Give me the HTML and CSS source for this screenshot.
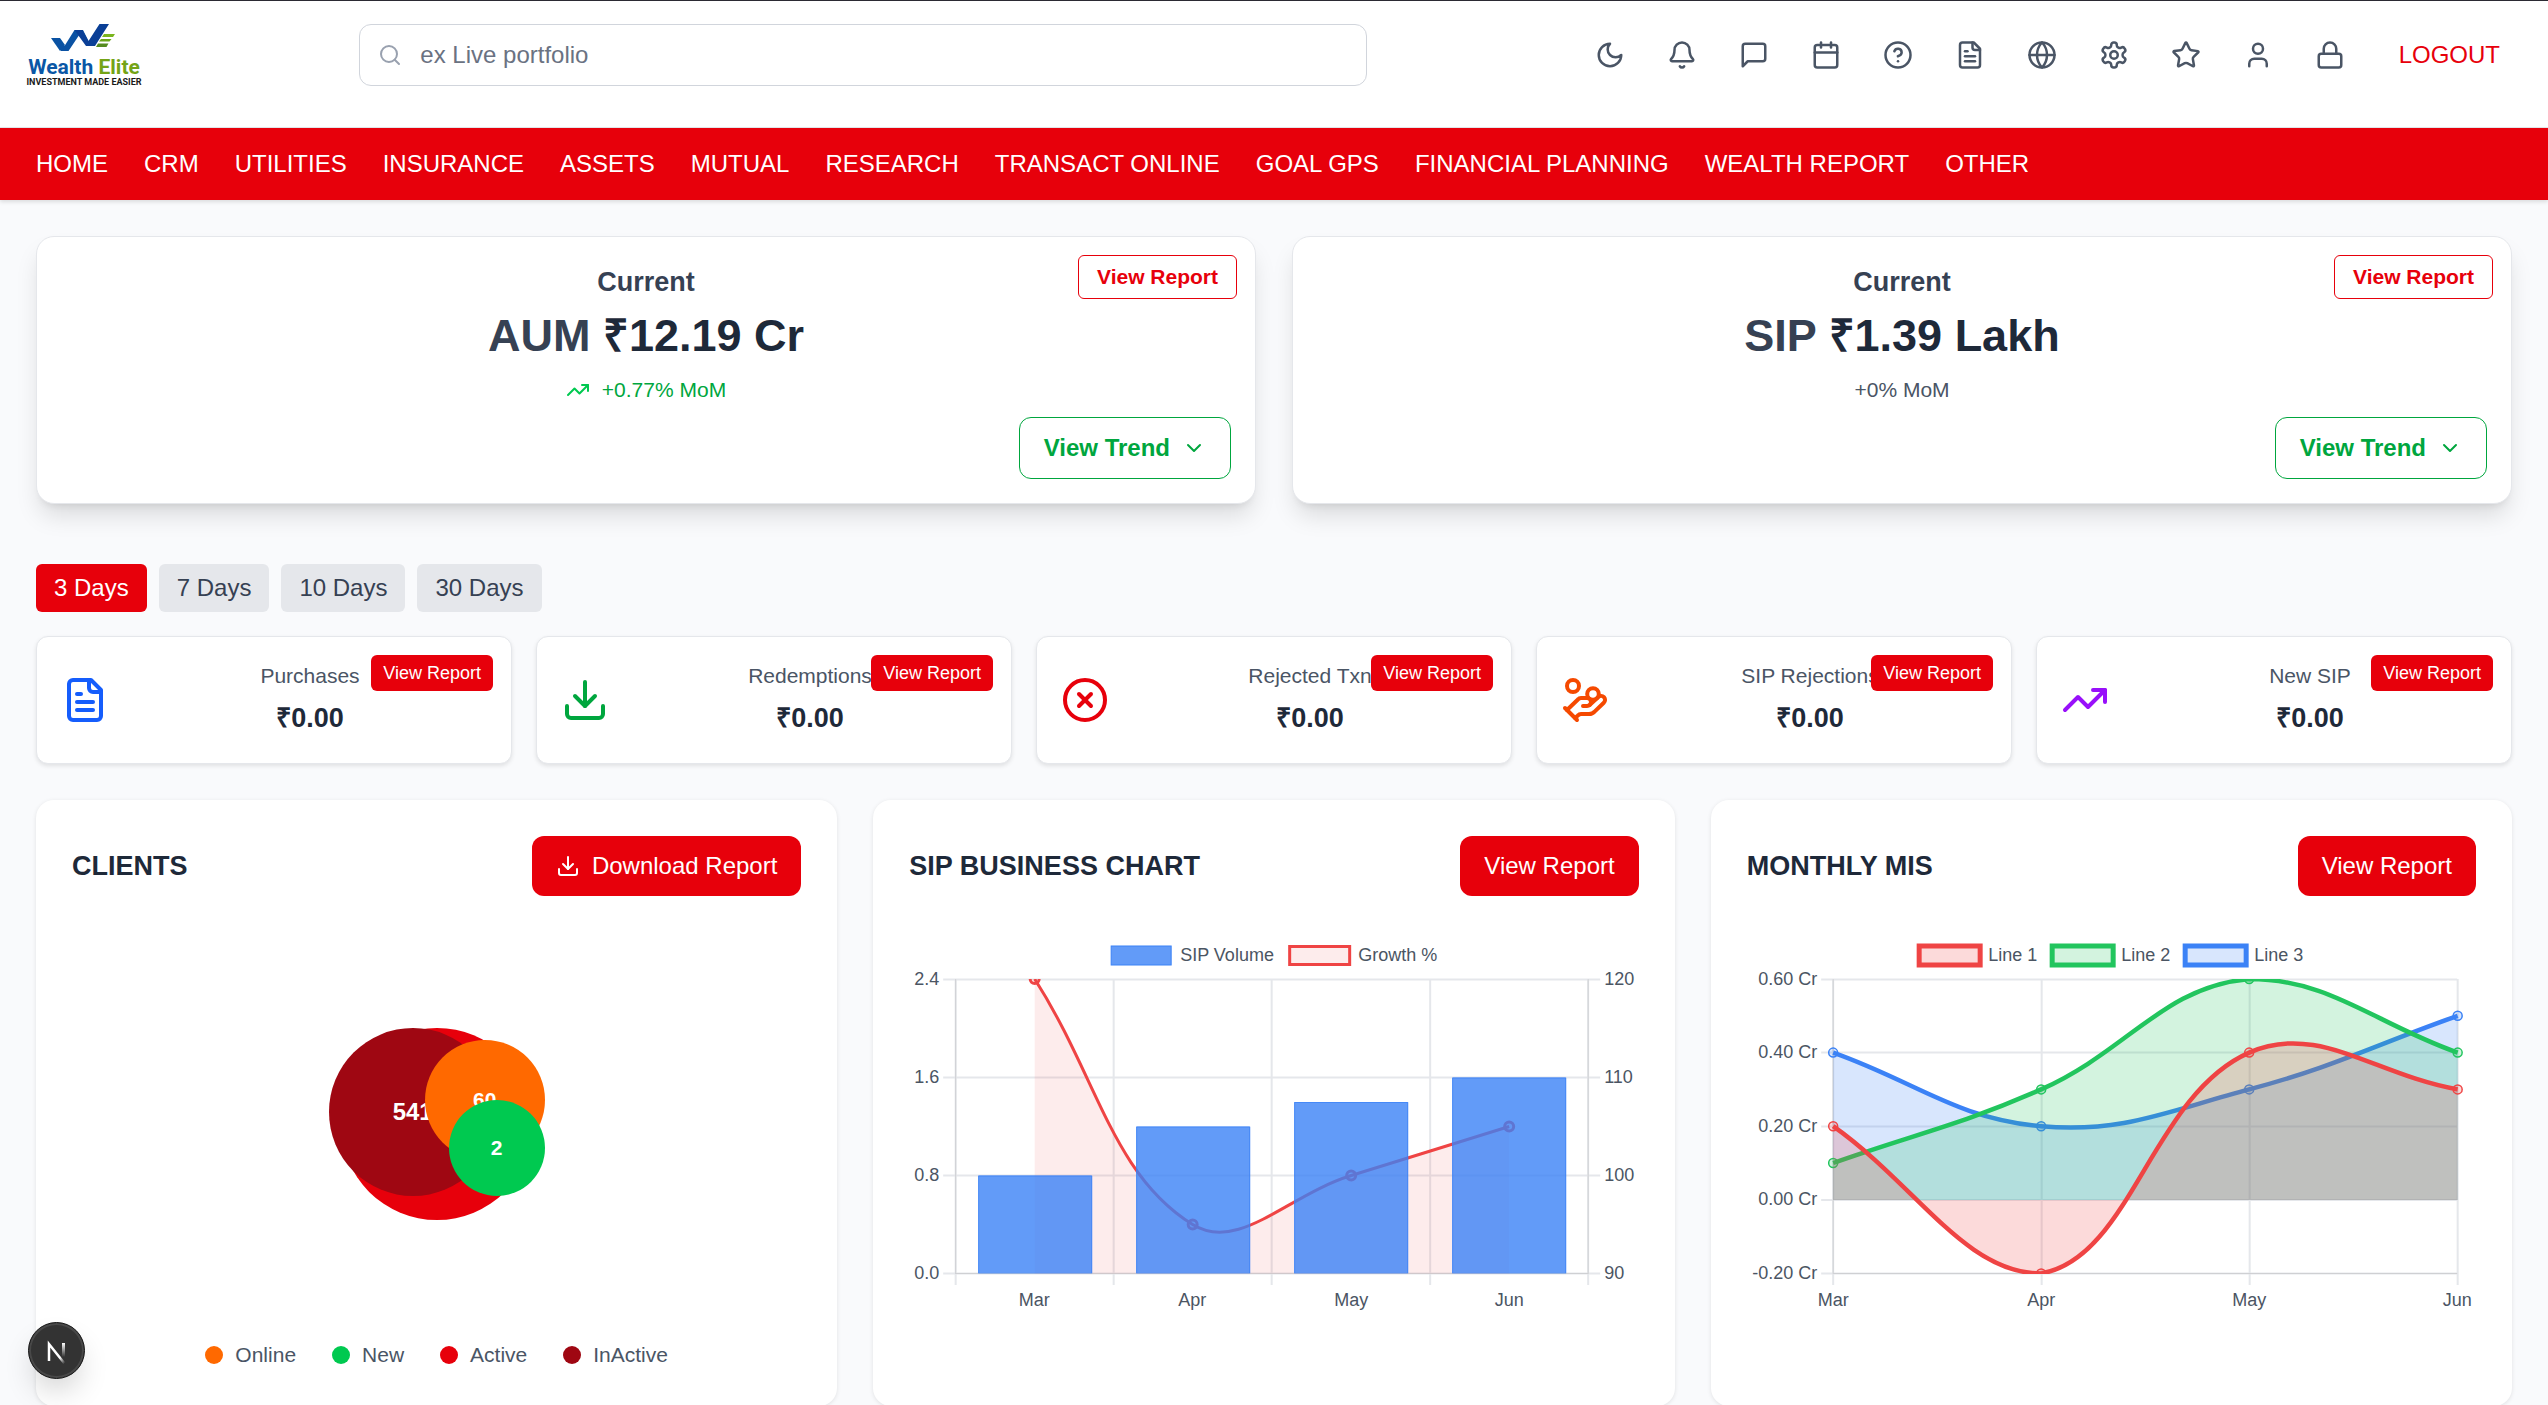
FILE: index.html
```html
<!DOCTYPE html>
<html lang="en">
<head>
<meta charset="utf-8">
<meta name="viewport" content="width=device-width, initial-scale=1">
<title>Wealth Elite</title>
<link rel="stylesheet" href="styles.css">
</head>
<body>
<svg class="sprite" aria-hidden="true">
  <symbol id="i-file" viewBox="0 0 24 24"><path d="M15 2H6a2 2 0 0 0-2 2v16a2 2 0 0 0 2 2h12a2 2 0 0 0 2-2V7Z"/><path d="M14 2v4a2 2 0 0 0 2 2h4"/><path d="M10 9H8"/><path d="M16 13H8"/><path d="M16 17H8"/></symbol>
  <symbol id="i-download" viewBox="0 0 24 24"><path d="M12 15V3"/><path d="M21 15v4a2 2 0 0 1-2 2H5a2 2 0 0 1-2-2v-4"/><path d="m7 10 5 5 5-5"/></symbol>
  <symbol id="i-trend" viewBox="0 0 24 24"><path d="M16 7h6v6"/><path d="m22 7-8.5 8.5-5-5L2 17"/></symbol>
  <symbol id="i-chevron" viewBox="0 0 24 24"><path d="m6 9 6 6 6-6"/></symbol>
</svg>

<header class="header">
  <a class="logo" href="#" aria-label="Wealth Elite">
    <svg width="120" height="62" viewBox="0 0 120 62">
      <path d="M27 14h9l5 7-5 6z" fill="#0b57a4"/>
      <path d="M51 6h8l8 16-4 0z" fill="#0b57a4"/>
      <path d="M28 14h7.500l5 8 10-16h8L44.500 27H37z" fill="#0a52a3"/>
      <path d="M50.500 6h8l6 11L75.500 0H85L71 22h-9z" fill="#0a3f96"/>
      <path d="M80 10h11l-2 3H78z" fill="#7ab51d"/>
      <path d="M77 15h10.500l-2 2.500H75z" fill="#6aa616"/>
      <path d="M74 19.500h10.500L82.500 23H72z" fill="#558b1e"/>
      <text class="logo-name" x="60" y="50" text-anchor="middle"><tspan fill="#0a57a6">Wealth</tspan> <tspan fill="#74a416">Elite</tspan></text>
      <text class="logo-tag" x="60" y="61" text-anchor="middle">INVESTMENT MADE EASIER</text>
    </svg>
  </a>
  <label class="search">
    <svg class="icon" viewBox="0 0 24 24"><circle cx="11" cy="11" r="8"/><path d="m21 21-4.300-4.300"/></svg>
    <input type="search" placeholder="ex Live portfolio" aria-label="Search">
  </label>
  <div class="tools">
    <button aria-label="Theme"><svg class="icon" viewBox="0 0 24 24"><path d="M12 3a6 6 0 0 0 9 9 9 9 0 1 1-9-9Z"/></svg></button>
    <button aria-label="Notifications"><svg class="icon" viewBox="0 0 24 24"><path d="M10.268 21a2 2 0 0 0 3.464 0"/><path d="M3.262 15.326A1 1 0 0 0 4 17h16a1 1 0 0 0 .74-1.673C19.410 13.956 18 12.499 18 8A6 6 0 0 0 6 8c0 4.499-1.411 5.956-2.738 7.326"/></svg></button>
    <button aria-label="Messages"><svg class="icon" viewBox="0 0 24 24"><path d="M21 15a2 2 0 0 1-2 2H7l-4 4V5a2 2 0 0 1 2-2h14a2 2 0 0 1 2 2z"/></svg></button>
    <button aria-label="Calendar"><svg class="icon" viewBox="0 0 24 24"><path d="M8 2v4"/><path d="M16 2v4"/><rect width="18" height="18" x="3" y="4" rx="2"/><path d="M3 10h18"/></svg></button>
    <button aria-label="Help"><svg class="icon" viewBox="0 0 24 24"><circle cx="12" cy="12" r="10"/><path d="M9.090 9a3 3 0 0 1 5.830 1c0 2-3 3-3 3"/><path d="M12 17h.01"/></svg></button>
    <button aria-label="Documents"><svg class="icon"><use href="#i-file"/></svg></button>
    <button aria-label="Language"><svg class="icon" viewBox="0 0 24 24"><circle cx="12" cy="12" r="10"/><path d="M12 2a14.500 14.500 0 0 0 0 20 14.500 14.500 0 0 0 0-20"/><path d="M2 12h20"/></svg></button>
    <button aria-label="Settings"><svg class="icon" viewBox="0 0 24 24"><path d="M12.220 2h-.44a2 2 0 0 0-2 2v.18a2 2 0 0 1-1 1.730l-.43.25a2 2 0 0 1-2 0l-.15-.08a2 2 0 0 0-2.730.73l-.22.38a2 2 0 0 0 .73 2.730l.15.1a2 2 0 0 1 1 1.720v.51a2 2 0 0 1-1 1.740l-.15.09a2 2 0 0 0-.73 2.730l.22.38a2 2 0 0 0 2.730.73l.15-.08a2 2 0 0 1 2 0l.43.25a2 2 0 0 1 1 1.730V20a2 2 0 0 0 2 2h.44a2 2 0 0 0 2-2v-.18a2 2 0 0 1 1-1.730l.43-.25a2 2 0 0 1 2 0l.15.08a2 2 0 0 0 2.730-.73l.22-.39a2 2 0 0 0-.73-2.730l-.15-.08a2 2 0 0 1-1-1.740v-.5a2 2 0 0 1 1-1.740l.15-.09a2 2 0 0 0 .73-2.730l-.22-.38a2 2 0 0 0-2.730-.73l-.15.08a2 2 0 0 1-2 0l-.43-.25a2 2 0 0 1-1-1.730V4a2 2 0 0 0-2-2z"/><circle cx="12" cy="12" r="3"/></svg></button>
    <button aria-label="Favourites"><svg class="icon" viewBox="0 0 24 24"><path d="M11.525 2.295a.53.53 0 0 1 .95 0l2.310 4.679a2.123 2.123 0 0 0 1.595 1.160l5.166.756a.53.53 0 0 1 .294.904l-3.736 3.638a2.123 2.123 0 0 0-.611 1.878l.882 5.140a.53.53 0 0 1-.771.560l-4.618-2.428a2.122 2.122 0 0 0-1.973 0L6.396 21.010a.53.53 0 0 1-.770-.560l.881-5.139a2.122 2.122 0 0 0-.611-1.879L2.160 9.795a.53.53 0 0 1 .294-.906l5.165-.755a2.122 2.122 0 0 0 1.597-1.160z"/></svg></button>
    <button aria-label="Profile"><svg class="icon" viewBox="0 0 24 24"><path d="M19 21v-2a4 4 0 0 0-4-4H9a4 4 0 0 0-4 4v2"/><circle cx="12" cy="7" r="4"/></svg></button>
    <button aria-label="Lock"><svg class="icon" viewBox="0 0 24 24"><rect width="18" height="11" x="3" y="11" rx="2"/><path d="M7 11V7a5 5 0 0 1 10 0v4"/></svg></button>
    <button class="logout">LOGOUT</button>
  </div>
</header>

<nav class="nav">
  <a href="#">HOME</a><a href="#">CRM</a><a href="#">UTILITIES</a><a href="#">INSURANCE</a><a href="#">ASSETS</a><a href="#">MUTUAL</a><a href="#">RESEARCH</a><a href="#">TRANSACT ONLINE</a><a href="#">GOAL GPS</a><a href="#">FINANCIAL PLANNING</a><a href="#">WEALTH REPORT</a><a href="#">OTHER</a>
</nav>

<main class="main">
  <section class="summary">
    <article class="total">
      <button class="outline-red">View Report</button>
      <h2 class="total-label">Current</h2>
      <p class="total-value"><span>AUM</span> ₹12.19 Cr</p>
      <p class="change up"><svg class="icon"><use href="#i-trend"/></svg>+0.77% MoM</p>
      <button class="outline-green">View Trend<svg class="icon"><use href="#i-chevron"/></svg></button>
    </article>
    <article class="total">
      <button class="outline-red">View Report</button>
      <h2 class="total-label">Current</h2>
      <p class="total-value"><span>SIP</span> ₹1.39 Lakh</p>
      <p class="change">+0% MoM</p>
      <button class="outline-green">View Trend<svg class="icon"><use href="#i-chevron"/></svg></button>
    </article>
  </section>

  <div class="tabs">
    <button class="active">3 Days</button><button>7 Days</button><button>10 Days</button><button>30 Days</button>
  </div>

  <section class="stats">
    <article class="stat">
      <svg class="icon blue"><use href="#i-file"/></svg>
      <div class="stat-text"><h3>Purchases</h3><p>₹0.00</p></div>
      <button>View Report</button>
    </article>
    <article class="stat">
      <svg class="icon green"><use href="#i-download"/></svg>
      <div class="stat-text"><h3>Redemptions</h3><p>₹0.00</p></div>
      <button>View Report</button>
    </article>
    <article class="stat">
      <svg class="icon red" viewBox="0 0 24 24"><circle cx="12" cy="12" r="10"/><path d="m15 9-6 6"/><path d="m9 9 6 6"/></svg>
      <div class="stat-text"><h3>Rejected Txn</h3><p>₹0.00</p></div>
      <button>View Report</button>
    </article>
    <article class="stat">
      <svg class="icon orange" viewBox="0 0 24 24"><path d="M11 15h2a2 2 0 1 0 0-4h-3c-.6 0-1.100.2-1.400.6L3 17"/><path d="m7 21 1.600-1.400c.3-.4.8-.6 1.400-.6h4c1.100 0 2.100-.4 2.800-1.200l4.600-4.400a2 2 0 0 0-2.750-2.910l-4.200 3.900"/><path d="m2 16 6 6"/><circle cx="16" cy="9" r="2.900"/><circle cx="6" cy="5" r="3"/></svg>
      <div class="stat-text"><h3>SIP Rejections</h3><p>₹0.00</p></div>
      <button>View Report</button>
    </article>
    <article class="stat">
      <svg class="icon purple"><use href="#i-trend"/></svg>
      <div class="stat-text"><h3>New SIP</h3><p>₹0.00</p></div>
      <button>View Report</button>
    </article>
  </section>

  <section class="panels">
    <article class="panel">
      <div class="panel-head"><h2>CLIENTS</h2><button><svg class="icon"><use href="#i-download"/></svg>Download Report</button></div>
      <div class="panel-body">
        <div class="bubbles">
          <span class="bubble b-active"></span>
          <span class="bubble b-inactive">541</span>
          <span class="bubble b-online">60</span>
          <span class="bubble b-new">2</span>
        </div>
      </div>
      <ul class="legend">
        <li class="l-online">Online</li><li class="l-new">New</li><li class="l-active">Active</li><li class="l-inactive">InActive</li>
      </ul>
    </article>

    <article class="panel">
      <div class="panel-head"><h2>SIP BUSINESS CHART</h2><button>View Report</button></div>
      <div class="panel-body">
        <svg class="chart" viewBox="0 0 729 384" role="img" aria-label="SIP business chart">
          <clipPath id="clip-sip"><rect x="46" y="47" width="633" height="295"/></clipPath>
          <rect x="202" y="14" width="60" height="19" fill="#629bf8" stroke="#3b82f6"/>
          <text x="271" y="29">SIP Volume</text>
          <rect x="380.500" y="14.500" width="60" height="18" fill="#fdecec" stroke="#ef4444" stroke-width="3"/>
          <text x="449" y="29">Growth %</text>
          <path class="grid" d="M34 47.500H691M34 145.500H691M34 243.500H691M34 341.500H691M46.500 47V353M204.500 47V353M362.500 47V353M521 47V353M679 47V353"/>
          <path class="axis" d="M46.500 47V342M679 47V342M46 341.500H679"/>
          <g clip-path="url(#clip-sip)">
            <path d="M125.500 47C188.400 145.200 202.600 242.400 283.500 292.500C329.400 321 378.700 263.100 442 243.500C505.300 223.900 536.800 214.100 600 194.500V341.500H125.500Z" fill="#ef4444" fill-opacity=".1"/>
            <path d="M125.500 47C188.400 145.200 202.600 242.400 283.500 292.500C329.400 321 378.700 263.100 442 243.500C505.300 223.900 536.800 214.100 600 194.500" fill="none" stroke="#ef4444" stroke-width="3"/>
            <g fill="#ef4444" fill-opacity=".1" stroke="#ef4444" stroke-width="3"><circle cx="125.500" cy="47" r="4.500"/><circle cx="283.500" cy="292.500" r="4.500"/><circle cx="442" cy="243.500" r="4.500"/><circle cx="600" cy="194.500" r="4.500"/></g>
            <g fill="#3b82f6" fill-opacity=".8"><rect x="69" y="243.500" width="114" height="98"/><rect x="227" y="194.500" width="114" height="147"/><rect x="385" y="170" width="114" height="171.500"/><rect x="543" y="145.500" width="114" height="196"/></g>
            <path d="M69.500 341V244H182.500V341M227.500 341V195H340.500V341M385.500 341V170.500H498.500V341M543.500 341V146H656.500V341" fill="none" stroke="#3b82f6" stroke-opacity=".7"/>
          </g>
          <g text-anchor="end"><text x="30" y="53">2.4</text><text x="30" y="151">1.6</text><text x="30" y="249">0.8</text><text x="30" y="347">0.0</text></g>
          <text x="695" y="53">120</text><text x="695" y="151">110</text><text x="695" y="249">100</text><text x="695" y="347">90</text>
          <g text-anchor="middle"><text x="125" y="374">Mar</text><text x="283" y="374">Apr</text><text x="442" y="374">May</text><text x="600" y="374">Jun</text></g>
        </svg>
      </div>
    </article>

    <article class="panel">
      <div class="panel-head"><h2>MONTHLY MIS</h2><button>View Report</button></div>
      <div class="panel-body">
        <svg class="chart" viewBox="0 0 729 384" role="img" aria-label="Monthly MIS chart">
          <clipPath id="clip-mis"><rect x="80" y="47" width="637" height="295"/></clipPath>
          <g stroke-width="5"><rect x="172" y="14" width="61" height="19" fill="#fcdada" stroke="#ef4444"/><rect x="305" y="14" width="61" height="19" fill="#d3f3df" stroke="#22c55e"/><rect x="438" y="14" width="61" height="19" fill="#d8e6fd" stroke="#3b82f6"/></g>
          <text x="241" y="29">Line 1</text><text x="374" y="29">Line 2</text><text x="507" y="29">Line 3</text>
          <path class="grid" d="M74 47.500H710M74 120.500H710M74 194.500H710M74 268H710M74 341.500H710M86 47V353M294.500 47V353M502.500 47V353M710.500 47V353"/>
          <path class="axis" d="M86 47V342M86 341.500H710"/>
          <g clip-path="url(#clip-mis)" stroke-width="4.500">
            <path d="M86 120.600C169.200 150 209 186.700 294 194.200C375.400 201.400 420.600 179 502 157.400C587.200 134.800 627.100 113.200 710.500 83.800V267.900H86Z" fill="#3b82f6" fill-opacity=".2"/>
            <path d="M86 120.600C169.200 150 209 186.700 294 194.200C375.400 201.400 420.600 179 502 157.400C587.200 134.800 627.100 113.200 710.500 83.800" fill="none" stroke="#3b82f6"/>
            <g fill="#3b82f6" fill-opacity=".2" stroke="#3b82f6" stroke-width="1.500"><circle cx="86" cy="120.600" r="4.500"/><circle cx="294" cy="194.200" r="4.500"/><circle cx="502" cy="157.400" r="4.500"/><circle cx="710.500" cy="83.800" r="4.500"/></g>
            <path d="M86 231C169.200 201.600 213.500 193 294 157.400C379.900 119.400 416.100 54.600 502 47C582.700 47 627.100 91.200 710.500 120.600V267.900H86Z" fill="#22c55e" fill-opacity=".2"/>
            <path d="M86 231C169.200 201.600 213.500 193 294 157.400C379.900 119.400 416.100 54.600 502 47C582.700 47 627.100 91.200 710.500 120.600" fill="none" stroke="#22c55e"/>
            <g fill="#22c55e" fill-opacity=".2" stroke="#22c55e" stroke-width="1.500"><circle cx="86" cy="231" r="4.500"/><circle cx="294" cy="157.400" r="4.500"/><circle cx="502" cy="47" r="4.500"/><circle cx="710.500" cy="120.600" r="4.500"/></g>
            <path d="M86 194.200C169.200 253.100 218 341.500 294 341.500C384.400 325.500 403.900 164 502 120.600C570.500 90.300 627.100 142.700 710.500 157.400V267.900H86Z" fill="#ef4444" fill-opacity=".2"/>
            <path d="M86 194.200C169.200 253.100 218 341.500 294 341.500C384.400 325.500 403.900 164 502 120.600C570.500 90.300 627.100 142.700 710.500 157.400" fill="none" stroke="#ef4444"/>
            <g fill="#ef4444" fill-opacity=".2" stroke="#ef4444" stroke-width="1.500"><circle cx="86" cy="194.200" r="4.500"/><circle cx="294" cy="341.500" r="4.500"/><circle cx="502" cy="120.600" r="4.500"/><circle cx="710.500" cy="157.400" r="4.500"/></g>
          </g>
          <g text-anchor="end"><text x="70" y="53">0.60 Cr</text><text x="70" y="126">0.40 Cr</text><text x="70" y="200">0.20 Cr</text><text x="70" y="273">0.00 Cr</text><text x="70" y="347">-0.20 Cr</text></g>
          <g text-anchor="middle"><text x="86" y="374">Mar</text><text x="294" y="374">Apr</text><text x="502" y="374">May</text><text x="710" y="374">Jun</text></g>
        </svg>
      </div>
    </article>
  </section>
</main>

<button class="dev" aria-label="Developer tools">
  <svg width="40" height="40" viewBox="0 0 40 40">
    <defs><linearGradient id="n1" x1="0" y1="0" x2="1" y2="1"><stop offset=".7" stop-color="#fff"/><stop offset="1" stop-color="#fff" stop-opacity="0"/></linearGradient><linearGradient id="n2" x1="0" y1="0" x2="0" y2="1"><stop offset="0" stop-color="#fff"/><stop offset="1" stop-color="#fff" stop-opacity="0"/></linearGradient></defs>
    <path d="M12 30V13L27.500 32.500" fill="none" stroke="url(#n1)" stroke-width="2.500"/>
    <rect x="25" y="12" width="3" height="14" fill="url(#n2)"/>
  </svg>
</button>
</body>
</html>
```
FILE: styles.css
```css
* { box-sizing: border-box; margin: 0; padding: 0; }
body {
  font: 24px/36px "Liberation Sans", Arial, sans-serif;
  color: #1e2939;
  background: #f9fafc;
  overflow-x: hidden;
}
button, input { font: inherit; color: inherit; background: none; border: 0; }
button { cursor: pointer; }
.sprite { display: none; }
.icon {
  width: 24px;
  height: 24px;
  flex: none;
  fill: none;
  stroke: currentColor;
  stroke-width: 2;
  stroke-linecap: round;
  stroke-linejoin: round;
}

/* header */
.header {
  display: flex;
  justify-content: space-between;
  align-items: center;
  padding: 23px 24px 41px;
  background: #fff;
  border-top: 1px solid #2b2a33;
  border-bottom: 1px solid #e5e7eb;
}
.logo svg { display: block; }
.logo-name { font: bold 21px Roboto, "Liberation Sans", sans-serif; }
.logo-tag { font: bold 9px Roboto, "Liberation Sans", sans-serif; fill: #1a1a1a; }
.search {
  display: flex;
  align-items: center;
  gap: 18px;
  flex: 0 1 1008px;
  height: 62px;
  padding: 0 18px;
  border: 1px solid #d1d5dc;
  border-radius: 12px;
  color: #99a1af;
}
.search input { flex: 1; outline: 0; color: #1e2939; }
.search input::placeholder { color: #6a7282; opacity: 1; }
.tools { display: flex; align-items: center; gap: 18px; color: #4a5565; }
.tools button { display: flex; padding: 12px; }
.tools .icon { width: 30px; height: 30px; }
.tools .logout { padding: 12px 24px; color: #e7000b; }

.nav {
  display: flex;
  gap: 36px;
  padding: 18px 36px;
  background: #e7000b;
  box-shadow: 0 2px 4px rgba(0, 0, 0, .12);
}
.nav a { color: #fff; text-decoration: none; white-space: nowrap; }

.main { padding: 36px 36px 0; }

/* totals */
.summary { display: grid; grid-template-columns: 1fr 1fr; gap: 36px; }
.total {
  position: relative;
  display: flex;
  flex-direction: column;
  align-items: center;
  padding: 24px;
  background: #fff;
  border: 1px solid #e5e7eb;
  border-radius: 18px;
  box-shadow: 0 15px 24px -4px rgba(0, 0, 0, .13), 0 6px 9px -6px rgba(0, 0, 0, .12);
}
.total-label { font-size: 27px; line-height: 42px; color: #364153; }
.total-value { margin-top: 6px; font-size: 45px; line-height: 54px; font-weight: bold; }
.total-value span { color: #364153; }
.change {
  display: flex;
  align-items: center;
  gap: 12px;
  margin-top: 12px;
  font-size: 21px;
  line-height: 30px;
  color: #4a5565;
}
.change.up { color: #00a63e; }
.change .icon { color: #00c950; }
.outline-red {
  position: absolute;
  top: 18px;
  right: 18px;
  padding: 6px 18px;
  font-size: 21px;
  line-height: 30px;
  font-weight: bold;
  color: #e7000b;
  background: #fff;
  border: 1px solid #e7000b;
  border-radius: 6px;
}
.outline-green {
  display: flex;
  align-items: center;
  align-self: flex-end;
  gap: 12px;
  margin-top: 12px;
  padding: 12px 24px;
  font-weight: bold;
  color: #00a63e;
  border: 1px solid #00a63e;
  border-radius: 12px;
}

/* period tabs */
.tabs { display: flex; gap: 12px; margin: 60px 0 24px; }
.tabs button { padding: 6px 18px; border-radius: 6px; background: #e5e7eb; color: #364153; }
.tabs .active { background: #e7000b; color: #fff; }

/* stats */
.stats { display: grid; grid-template-columns: repeat(5, 1fr); gap: 24px; }
.stat {
  position: relative;
  display: flex;
  align-items: center;
  gap: 24px;
  padding: 24px;
  background: #fff;
  border: 1px solid #e5e7eb;
  border-radius: 12px;
  box-shadow: 0 2px 4px rgba(0, 0, 0, .1);
}
.stat .icon { width: 48px; height: 48px; }
.stat-text { flex: 1; text-align: center; }
.stat h3 { font-size: 21px; line-height: 30px; font-weight: normal; color: #4a5565; }
.stat p { margin-top: 6px; font-size: 27px; line-height: 42px; font-weight: bold; }
.stat button {
  position: absolute;
  top: 18px;
  right: 18px;
  padding: 6px 12px;
  font-size: 18px;
  line-height: 24px;
  color: #fff;
  background: #e7000b;
  border-radius: 6px;
}
.blue { color: #155dfc; }
.green { color: #00a63e; }
.red { color: #e7000b; }
.orange { color: #f54900; }
.purple { color: #9810fa; }

/* chart panels */
.panels { display: grid; grid-template-columns: repeat(3, 1fr); gap: 36px; margin-top: 36px; }
.panel {
  min-width: 0;
  padding: 36px;
  background: #fff;
  border-radius: 18px;
  box-shadow: 0 1px 4px rgba(0, 0, 0, .1);
}
.panel-head { display: flex; justify-content: space-between; align-items: center; }
.panel-head h2 { font-size: 27px; line-height: 42px; }
.panel-head button {
  display: flex;
  align-items: center;
  gap: 12px;
  padding: 12px 24px;
  color: #fff;
  background: #e7000b;
  border-radius: 12px;
}
.panel-body { display: flex; justify-content: center; align-items: center; height: 384px; margin-top: 36px; }
.chart { width: 100%; height: 384px; font-size: 18px; }
.chart text { fill: #4b5563; }
.grid { fill: none; stroke: #e5e7eb; stroke-width: 2; }
.axis { fill: none; stroke: #cfd0d3; stroke-width: 1; }

.bubbles { position: relative; width: 192px; height: 192px; }
.bubble {
  position: absolute;
  display: flex;
  align-items: center;
  justify-content: center;
  border-radius: 50%;
  font-size: 21px;
  font-weight: bold;
  color: #fff;
}
.b-active { inset: 0; background: #e7000b; }
.b-inactive { left: -12px; top: 0; width: 168px; height: 168px; font-size: 24px; background: #9f0712; }
.b-online { right: -12px; top: 12px; width: 120px; height: 120px; background: #ff6900; }
.b-new { right: -12px; bottom: 24px; width: 96px; height: 96px; background: #00c950; }

.legend {
  display: flex;
  justify-content: center;
  gap: 36px;
  margin-top: 24px;
  list-style: none;
  font-size: 21px;
  line-height: 30px;
  color: #4a5565;
}
.legend li { display: flex; align-items: center; gap: 12px; }
.legend li::before { content: ""; width: 18px; height: 18px; border-radius: 50%; background: currentColor; }
.legend .l-online::before { color: #ff6900; }
.legend .l-new::before { color: #00c950; }
.legend .l-active::before { color: #e7000b; }
.legend .l-inactive::before { color: #9f0712; }

.dev {
  position: fixed;
  left: 28px;
  bottom: 26px;
  display: flex;
  align-items: center;
  justify-content: center;
  width: 57px;
  height: 57px;
  border-radius: 50%;
  background: #333;
  border: 1px solid #171717;
  box-shadow: inset 0 0 0 2px #484848, 0 16px 32px -8px rgba(0, 0, 0, .24);
}
```
